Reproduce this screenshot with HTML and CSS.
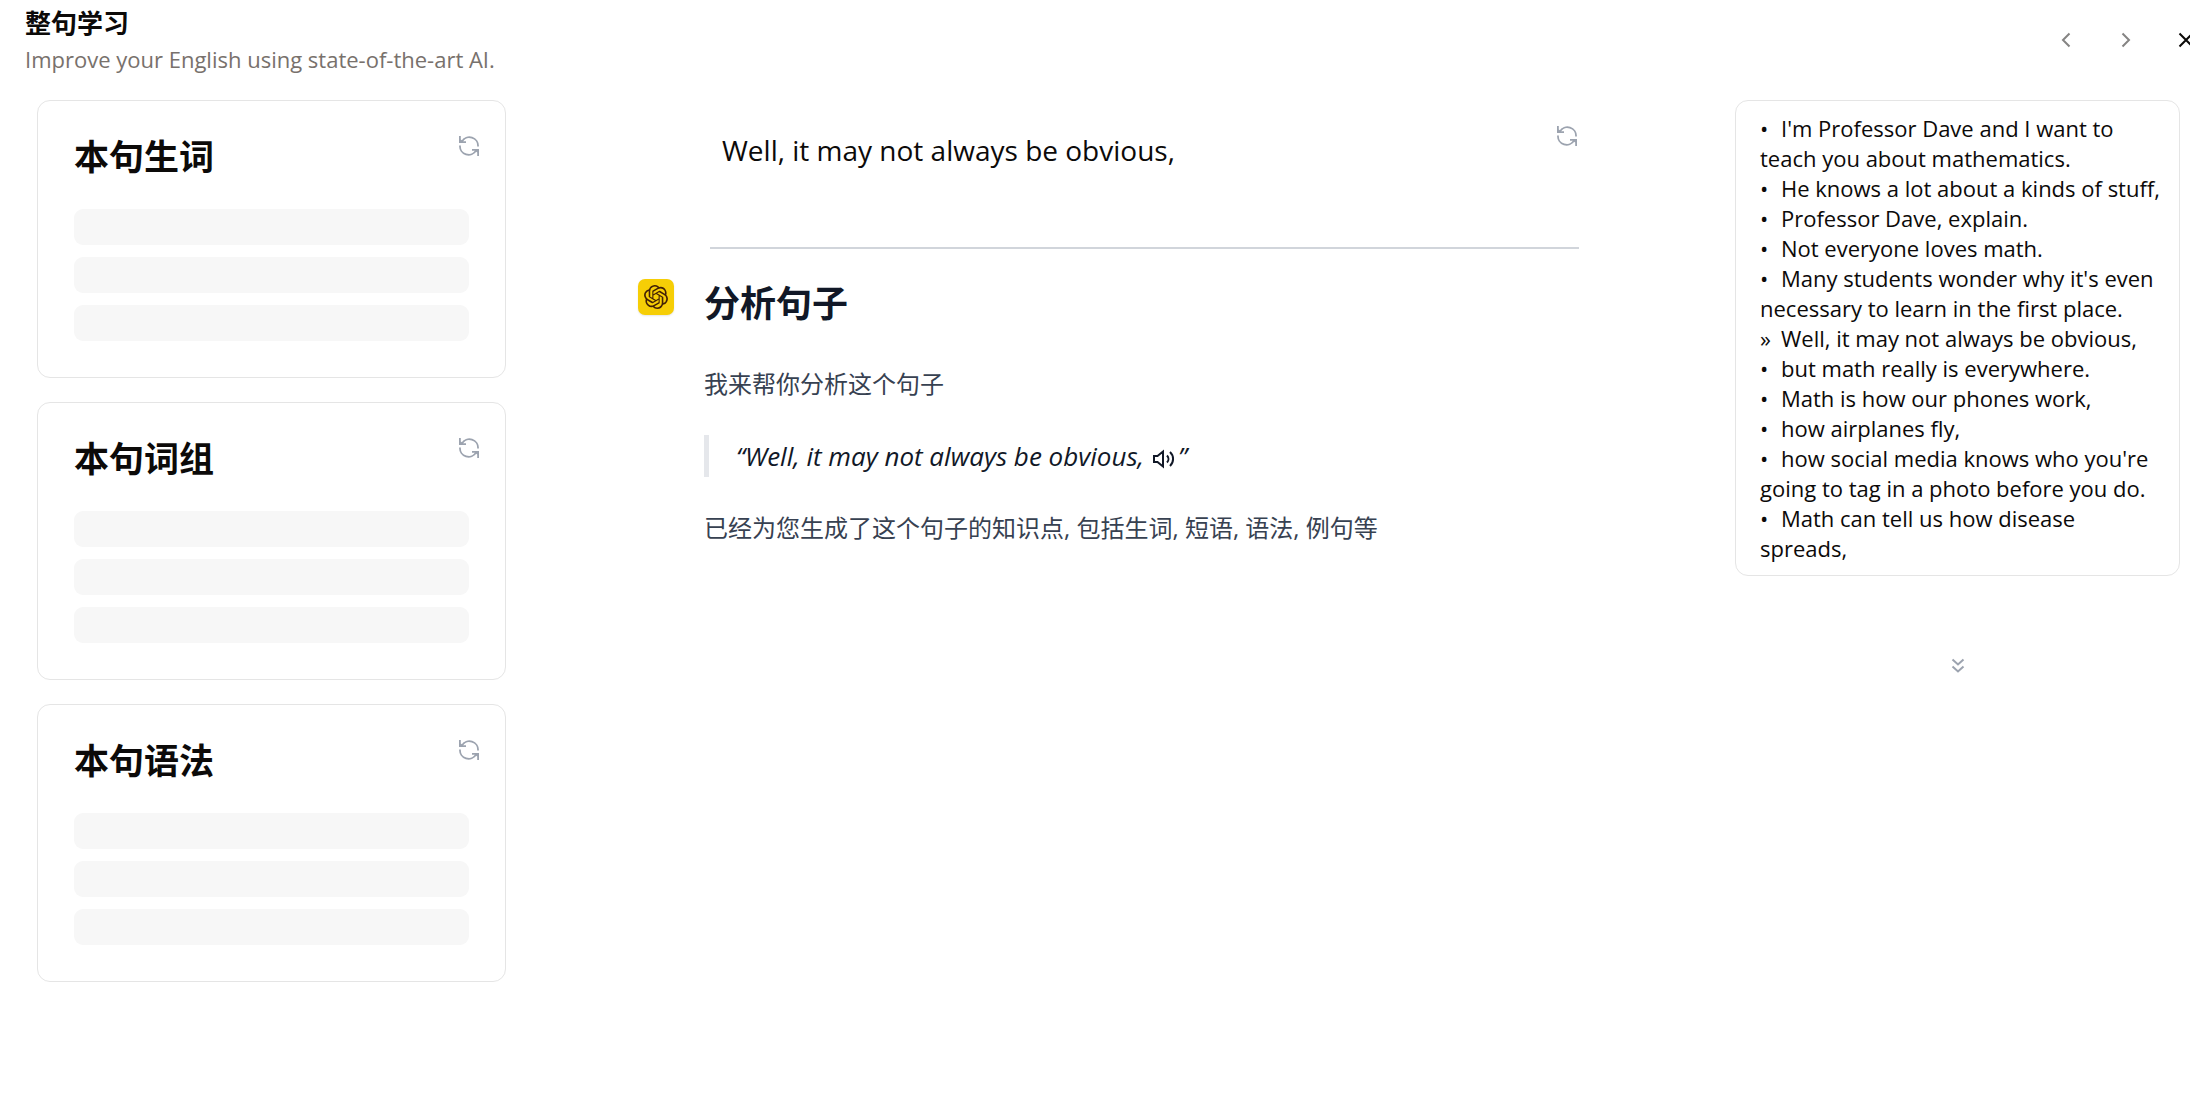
FILE: index.html
```
<!DOCTYPE html>
<html lang="zh-CN">
<head>
  <meta charset="UTF-8" />
  <meta name="viewport" content="width=device-width, initial-scale=1.0"/>
  <title>整句学习</title>
  <link rel="stylesheet" href="styles.css">
</head>
<body>
  <svg class="sprite" aria-hidden="true">
    <symbol id="icon-refresh" viewBox="0 0 20 20">
      <path d="M3 5.5A8.6 8.6 0 0 1 19 10.5M17 14.5A8.6 8.6 0 0 1 1 9.5" fill="none" stroke="currentColor" stroke-width="1.8"/>
      <path d="M0 0h1.8v3.4L4.2 5.2H7V7H0zM20 20h-1.8v-3.4l-2.4-1.8H13V13h7z" fill="currentColor"/>
    </symbol>
  </svg>

  <header class="header">
    <div class="heading">
      <h1>整句学习</h1>
      <p>Improve your English using state-of-the-art AI.</p>
    </div>
    <nav class="controls">
      <button class="icon-btn" aria-label="Previous">
        <svg width="10" height="16" viewBox="0 0 10 16"><path d="M8.5 1.5L2 8l6.5 6.5"/></svg>
      </button>
      <button class="icon-btn" aria-label="Next">
        <svg width="10" height="16" viewBox="0 0 10 16"><path d="M1.5 1.5L8 8l-6.5 6.5"/></svg>
      </button>
      <button class="icon-btn close" aria-label="Close">
        <svg width="16" height="16" viewBox="0 0 16 16"><path d="M1.5 1.5l13 13M14.5 1.5l-13 13"/></svg>
      </button>
    </nav>
  </header>

  <main class="layout">
    <aside class="cards">
      <section class="card">
        <h2>本句生词</h2>
        <button class="refresh" aria-label="Refresh"><svg><use href="#icon-refresh"/></svg></button>
        <div class="skeleton"></div>
        <div class="skeleton"></div>
        <div class="skeleton"></div>
      </section>
      <section class="card">
        <h2>本句词组</h2>
        <button class="refresh" aria-label="Refresh"><svg><use href="#icon-refresh"/></svg></button>
        <div class="skeleton"></div>
        <div class="skeleton"></div>
        <div class="skeleton"></div>
      </section>
      <section class="card">
        <h2>本句语法</h2>
        <button class="refresh" aria-label="Refresh"><svg><use href="#icon-refresh"/></svg></button>
        <div class="skeleton"></div>
        <div class="skeleton"></div>
        <div class="skeleton"></div>
      </section>
    </aside>

    <div class="content">
      <div class="sentence">
        <p>Well, it may not always be obvious,</p>
        <button class="refresh" aria-label="Refresh"><svg><use href="#icon-refresh"/></svg></button>
      </div>
      <div class="message">
        <div class="avatar">
          <svg width="24" height="24" viewBox="0 0 24 24"><path d="M22.2819 9.8211a5.9847 5.9847 0 0 0-.5157-4.9108 6.0462 6.0462 0 0 0-6.5098-2.9A6.0651 6.0651 0 0 0 4.9807 4.1818a5.9847 5.9847 0 0 0-3.9977 2.9 6.0462 6.0462 0 0 0 .7427 7.0966 5.98 5.98 0 0 0 .511 4.9107 6.051 6.051 0 0 0 6.5146 2.9001A5.9847 5.9847 0 0 0 13.2599 24a6.0557 6.0557 0 0 0 5.7718-4.2058 5.9894 5.9894 0 0 0 3.9977-2.9001 6.0557 6.0557 0 0 0-.7475-7.0729zm-9.022 12.6081a4.4755 4.4755 0 0 1-2.8764-1.0408l.1419-.0804 4.7783-2.7582a.7948.7948 0 0 0 .3927-.6813v-6.7369l2.02 1.1686a.071.071 0 0 1 .038.052v5.5826a4.504 4.504 0 0 1-4.4945 4.4944zm-9.6607-4.1254a4.4708 4.4708 0 0 1-.5346-3.0137l.142.0852 4.783 2.7582a.7712.7712 0 0 0 .7806 0l5.8428-3.3685v2.3324a.0804.0804 0 0 1-.0332.0615L9.74 19.9502a4.4992 4.4992 0 0 1-6.1408-1.6464zM2.3408 7.8956a4.485 4.485 0 0 1 2.3655-1.9728V11.6a.7664.7664 0 0 0 .3879.6765l5.8144 3.3543-2.0201 1.1685a.0757.0757 0 0 1-.071 0l-4.8303-2.7865A4.504 4.504 0 0 1 2.3408 7.872zm16.5963 3.8558L13.1038 8.364 15.1192 7.2a.0757.0757 0 0 1 .071 0l4.8303 2.7913a4.4944 4.4944 0 0 1-.6765 8.1042v-5.6772a.79.79 0 0 0-.407-.667zm2.0107-3.0231l-.142-.0852-4.7735-2.7818a.7759.7759 0 0 0-.7854 0L9.409 9.2297V6.8974a.0662.0662 0 0 1 .0284-.0615l4.8303-2.7866a4.4992 4.4992 0 0 1 6.6802 4.66zM8.3065 12.863l-2.02-1.1638a.0804.0804 0 0 1-.038-.0567V6.0742a4.4992 4.4992 0 0 1 7.3757-3.4537l-.142.0805L8.704 5.459a.7948.7948 0 0 0-.3927.6813zm1.0976-2.3654l2.602-1.4998 2.6069 1.4998v2.9994l-2.5974 1.4997-2.6067-1.4997Z"/></svg>
        </div>
        <article class="prose">
          <h2>分析句子</h2>
          <p>我来帮你分析这个句子</p>
          <blockquote>“Well, it may not always be obvious,<button class="speak" aria-label="Play"><svg width="24" height="20" viewBox="0 0 24 20"><path d="M2 7h3.5L11 2.5v15L5.5 13H2zM15 6.5a5 5 0 0 1 0 7M18 3a9.5 9.5 0 0 1 0 14"/></svg></button>”</blockquote>
          <p>已经为您生成了这个句子的知识点, 包括生词, 短语, 语法, 例句等</p>
        </article>
      </div>
    </div>

    <aside class="sidebar">
      <ul class="transcript">
        <li>I'm Professor Dave and I want to teach you about mathematics.</li>
        <li>He knows a lot about a kinds of stuff,</li>
        <li>Professor Dave, explain.</li>
        <li>Not everyone loves math.</li>
        <li>Many students wonder why it's even necessary to learn in the first place.</li>
        <li class="current">Well, it may not always be obvious,</li>
        <li>but math really is everywhere.</li>
        <li>Math is how our phones work,</li>
        <li>how airplanes fly,</li>
        <li>how social media knows who you're going to tag in a photo before you do.</li>
        <li>Math can tell us how disease spreads,</li>
      </ul>
      <button class="icon-btn more" aria-label="More">
        <svg width="14" height="16" viewBox="0 0 14 16"><path d="M1.5 1.5L7 6.500l5.500-5M1.5 8.5L7 13.500l5.500-5"/></svg>
      </button>
    </aside>
  </main>
</body>
</html>
```
FILE: styles.css
```
* {
  box-sizing: border-box;
}

body {
  margin: 0;
  font-family: "Open Sans", "Noto Sans CJK SC", sans-serif;
  font-size: 22px;
  color: #0c0a09;
  background: #fff;
  overflow-x: hidden;
}

h1, h2, p, ul, blockquote {
  margin: 0;
  padding: 0;
}

button {
  padding: 0;
  border: none;
  background: none;
  color: #9ca3af;
  cursor: pointer;
}

svg {
  display: block;
}

.sprite {
  position: absolute;
  width: 0;
  height: 0;
}

.header {
  display: flex;
  justify-content: space-between;
  align-items: center;
  padding-left: 25px;
}

.heading {
  padding: 5px 0 3px;
}

.heading h1 {
  font-size: 26px;
  line-height: 36px;
}

.heading p {
  line-height: 36px;
  color: #78716c;
}

/* the close button hangs over the right edge */
.controls {
  display: flex;
  margin-right: -26px;
}

.icon-btn {
  display: flex;
  align-items: center;
  justify-content: center;
  width: 60px;
  height: 60px;
  color: #858483;
}

.icon-btn path {
  fill: none;
  stroke: currentColor;
  stroke-width: 2;
}

.icon-btn.close {
  color: #0c0a09;
}

.layout {
  display: grid;
  grid-template-columns: 469fr 1229fr 445fr;
  align-items: start;
  margin-top: 20px;
  padding: 0 10px 0 37px;
}

.cards {
  display: flex;
  flex-direction: column;
  gap: 24px;
}

.card {
  position: relative;
  display: flex;
  flex-direction: column;
  gap: 12px;
  padding: 36px;
  border: 1px solid #e5e5e5;
  border-radius: 13px;
}

.card h2 {
  margin-bottom: 20px;
  font-size: 35px;
  line-height: 40px;
}

.refresh {
  position: absolute;
  top: 35px;
  right: 26px;
}

.refresh svg {
  width: 20px;
  height: 20px;
}

.skeleton {
  height: 36px;
  border-radius: 9px;
  background: #f7f7f7;
}

.content {
  padding: 0 156px 0 132px;
}

.sentence {
  position: relative;
  margin-left: 72px;
  padding: 32px 12px 79px;
  border-bottom: 2px solid #d1d5db;
  font-size: 28px;
  line-height: 36px;
}

.sentence .refresh {
  top: 26px;
  right: 2px;
}

.message {
  display: flex;
  gap: 30px;
  margin-top: 30px;
}

.avatar {
  display: flex;
  flex: none;
  align-items: center;
  justify-content: center;
  width: 36px;
  height: 36px;
  border-radius: 7px;
  background: #f6ce06;
  box-shadow: 0 1px 2px rgba(0, 0, 0, 0.1);
}

.avatar path {
  fill: #422006;
}

.prose {
  display: flex;
  flex-direction: column;
  gap: 30px;
  padding-top: 5px;
  font-size: 24px;
  line-height: 42px;
  color: #374151;
}

.prose h2 {
  margin-bottom: 9px;
  font-size: 36px;
  line-height: 40px;
  color: #111827;
}

.prose blockquote {
  padding-left: 27px;
  border-left: 5px solid #e5e7eb;
  font-size: 26px;
  font-style: italic;
  color: #111827;
}

.speak {
  display: inline-block;
  margin: 0 2px 0 8px;
  vertical-align: middle;
  color: #111827;
}

.speak path {
  fill: none;
  stroke: currentColor;
  stroke-width: 2;
}

.sidebar {
  display: flex;
  flex-direction: column;
  align-items: center;
}

.transcript {
  width: 100%;
  padding: 12px 18px 12px 24px;
  border: 1px solid #e5e5e5;
  border-radius: 13px;
  list-style: none;
  line-height: 30px;
}

.transcript li::before {
  content: "•";
  display: inline-block;
  width: 21px;
}

.transcript .current::before {
  content: "»";
}

.more {
  margin-top: 60px;
  color: #9ca3af;
}
```
